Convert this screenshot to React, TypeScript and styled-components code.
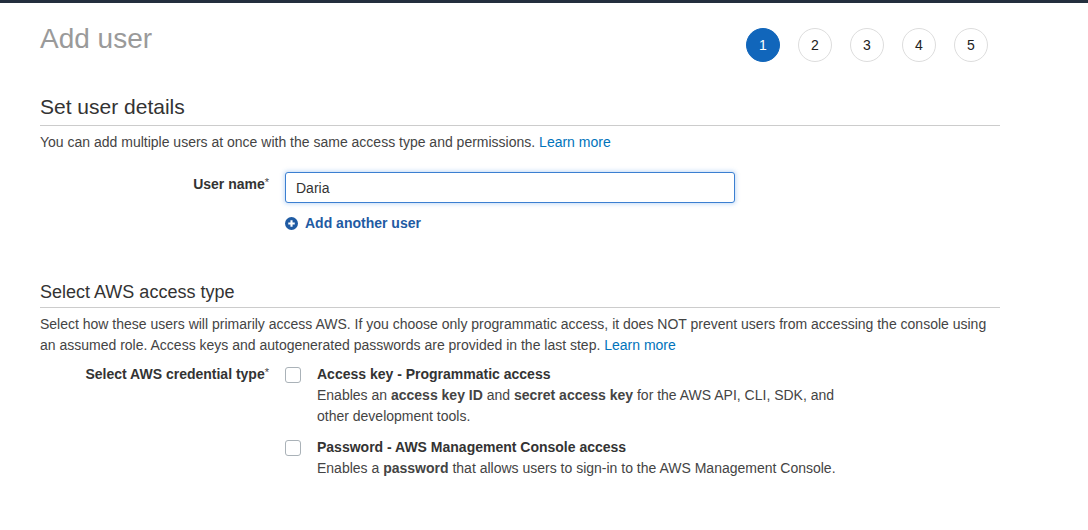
import styled, { createGlobalStyle } from "styled-components"

const GlobalStyle = createGlobalStyle`
    html, body {
        margin: 0;
        padding: 0;
        background: #ffffff;
        font-family: "Liberation Sans", Arial, sans-serif;
        font-size: 14px;
        color: #444444;
    }
`

const TopBar = styled.div`
    height: 3px;
    background-color: #232f3e;
`

const Page = styled.main`
    width: 960px;
    padding: 0 0 0 40px;
`

const Header = styled.header`
    display: flex;
    align-items: flex-start;
    justify-content: space-between;
    padding-top: 19px;
`

const Title = styled.h1`
    margin: 0;
    font-size: 28px;
    line-height: 34px;
    font-weight: 400;
    color: #9a9a9a;
`

const Steps = styled.ol`
    display: flex;
    gap: 18px;
    list-style: none;
    margin: 6px 12px 0 0;
    padding: 0;
`

const Step = styled.li<{ $active?: boolean }>`
    width: 34px;
    height: 34px;
    box-sizing: border-box;
    border-radius: 50%;
    display: flex;
    align-items: center;
    justify-content: center;
    font-size: 14px;
    color: ${p => (p.$active ? "#ffffff" : "#222222")};
    background-color: ${p => (p.$active ? "#1166bb" : "#ffffff")};
    border: 1px solid ${p => (p.$active ? "#1166bb" : "#dddddd")};
`

const Section = styled.section<{ $top: number }>`
    margin-top: ${p => p.$top}px;
`

const SectionTitle = styled.h2<{ $size: number; $gap: number }>`
    margin: 0;
    font-size: ${p => p.$size}px;
    line-height: 24px;
    font-weight: 400;
    color: #333333;
    padding-bottom: ${p => p.$gap}px;
    border-bottom: 1px solid #cccccc;
`

const Intro = styled.p`
    margin: 6px 0 0;
    line-height: 21px;
`

const Link = styled.a`
    color: #0073bb;
    text-decoration: none;
`

const FieldRow = styled.div<{ $top: number }>`
    display: grid;
    grid-template-columns: 229px 1fr;
    column-gap: 16px;
    margin-top: ${p => p.$top}px;
`

const FieldLabel = styled.label<{ $pad: number }>`
    text-align: right;
    font-weight: 700;
    color: #333333;
    line-height: 21px;
    padding-top: ${p => p.$pad}px;
`

const Required = styled.span`
    font-weight: 400;
    font-size: 11px;
    color: #444444;
    vertical-align: top;
    position: relative;
    top: -2px;
`

const TextInput = styled.input`
    box-sizing: border-box;
    width: 450px;
    height: 31px;
    padding: 0 10px;
    font-family: inherit;
    font-size: 14px;
    color: #333333;
    border: 1px solid #3b7fd1;
    border-radius: 3px;
    box-shadow: 0 0 4px 1px rgba(80, 150, 230, 0.35);
    outline: none;
`

const AddLink = styled.a`
    display: inline-flex;
    align-items: center;
    gap: 7px;
    margin-top: 12px;
    font-weight: 700;
    color: #1f5ba3;
    text-decoration: none;
`

const Options = styled.div`
    display: flex;
    flex-direction: column;
    gap: 10px;
`

const Option = styled.label`
    display: flex;
    align-items: flex-start;
    gap: 16px;
`

const Box = styled.span`
    flex: none;
    box-sizing: border-box;
    width: 16px;
    height: 16px;
    margin-top: 3px;
    border: 1px solid #aab2b8;
    border-radius: 3px;
    background: #ffffff;
`

const OptionText = styled.div`
    max-width: 540px;
    line-height: 21px;
`

const OptionTitle = styled.div`
    font-weight: 700;
    color: #333333;
`

const PlusIcon = () => (
    <svg width="13" height="13" viewBox="0 0 16 16">
        <circle cx="8" cy="8" r="8" fill="#1f5ba3" />
        <path d="M8 4v8M4 8h8" stroke="#ffffff" strokeWidth="2.6" />
    </svg>
)

export default function App() {
    return (
        <>
            <GlobalStyle />
            <TopBar />
            <Page>
                <Header>
                    <Title>Add user</Title>
                    <Steps>
                        {[1, 2, 3, 4, 5].map(n => (
                            <Step key={n} $active={n === 1}>{n}</Step>
                        ))}
                    </Steps>
                </Header>

                <Section $top={33}>
                    <SectionTitle $size={21} $gap={6}>Set user details</SectionTitle>
                    <Intro>
                        You can add multiple users at once with the same access type and permissions. <Link href="#">Learn more</Link>
                    </Intro>
                    <FieldRow $top={19}>
                        <FieldLabel $pad={2}>User name<Required>*</Required></FieldLabel>
                        <div>
                            <TextInput defaultValue="Daria" />
                            <div>
                                <AddLink href="#"><PlusIcon />Add another user</AddLink>
                            </div>
                        </div>
                    </FieldRow>
                </Section>

                <Section $top={47}>
                    <SectionTitle $size={18} $gap={3}>Select AWS access type</SectionTitle>
                    <Intro>
                        Select how these users will primarily access AWS. If you choose only programmatic access, it does NOT prevent users from accessing the console using an assumed role. Access keys and autogenerated passwords are provided in the last step. <Link href="#">Learn more</Link>
                    </Intro>
                    <FieldRow $top={8}>
                        <FieldLabel $pad={0}>Select AWS credential type<Required>*</Required></FieldLabel>
                        <Options>
                            <Option>
                                <Box />
                                <OptionText>
                                    <OptionTitle>Access key - Programmatic access</OptionTitle>
                                    Enables an <b>access key ID</b> and <b>secret access key</b> for the AWS API, CLI, SDK, and other development tools.
                                </OptionText>
                            </Option>
                            <Option>
                                <Box />
                                <OptionText>
                                    <OptionTitle>Password - AWS Management Console access</OptionTitle>
                                    Enables a <b>password</b> that allows users to sign-in to the AWS Management Console.
                                </OptionText>
                            </Option>
                        </Options>
                    </FieldRow>
                </Section>
            </Page>
        </>
    )
}
